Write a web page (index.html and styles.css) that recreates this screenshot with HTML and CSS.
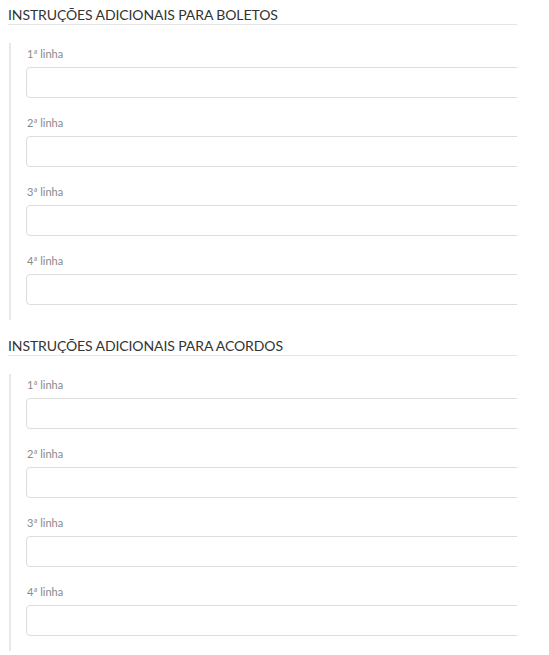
FILE: index.html
```html
<!DOCTYPE html>
<html lang="pt-BR">
<head>
    <meta charset="UTF-8">
    <meta name="viewport" content="width=device-width, initial-scale=1.0">
    <title>Instruções adicionais</title>
    <link rel="stylesheet" href="styles.css">
</head>
<body>
    <div class="panel">
        <section class="group">
            <h3 class="group-title">Instruções adicionais para boletos</h3>
            <div class="fields">
                <div class="field">
                    <label for="boleto-1">1ª linha</label>
                    <input type="text" id="boleto-1" class="input">
                </div>
                <div class="field">
                    <label for="boleto-2">2ª linha</label>
                    <input type="text" id="boleto-2" class="input">
                </div>
                <div class="field">
                    <label for="boleto-3">3ª linha</label>
                    <input type="text" id="boleto-3" class="input">
                </div>
                <div class="field">
                    <label for="boleto-4">4ª linha</label>
                    <input type="text" id="boleto-4" class="input">
                </div>
            </div>
        </section>

        <section class="group">
            <h3 class="group-title">Instruções adicionais para acordos</h3>
            <div class="fields">
                <div class="field">
                    <label for="acordo-1">1ª linha</label>
                    <input type="text" id="acordo-1" class="input">
                </div>
                <div class="field">
                    <label for="acordo-2">2ª linha</label>
                    <input type="text" id="acordo-2" class="input">
                </div>
                <div class="field">
                    <label for="acordo-3">3ª linha</label>
                    <input type="text" id="acordo-3" class="input">
                </div>
                <div class="field">
                    <label for="acordo-4">4ª linha</label>
                    <input type="text" id="acordo-4" class="input">
                </div>
            </div>
        </section>
    </div>
</body>
</html>
```

FILE: styles.css
```css
body {
    margin: 0;
    font-family: Lato, "Open Sans", sans-serif;
    background-color: #fff;
    color: #333;
}
.panel {
    width: 517px;
    overflow: hidden;
    padding-top: 7px;
}
.group {
    width: 560px;
    margin-bottom: 18px;
}
.group-title {
    margin: 0 0 18px 8px;
    padding-bottom: 1px;
    font-size: 14px;
    line-height: 16px;
    font-weight: normal;
    text-transform: uppercase;
    letter-spacing: -0.1px;
    color: #333;
    border-bottom: 1px solid #e5e5e5;
}
.fields {
    margin-left: 9px;
    padding: 4px 0 15px 15px;
    border-left: 2px solid #e8e8e8;
}
.field {
    display: flex;
    flex-direction: column;
}
.field + .field {
    margin-top: 18px;
}
.field label {
    font-size: 11px;
    line-height: 14px;
    color: #8a8a8a;
    padding-left: 1px;
    margin-bottom: 6px;
}
.input {
    box-sizing: border-box;
    height: 31px;
    border: 1px solid #ddd;
    border-radius: 4px;
    font-family: inherit;
    font-size: 12px;
    padding: 0 8px;
    background-color: #fff;
}
```
